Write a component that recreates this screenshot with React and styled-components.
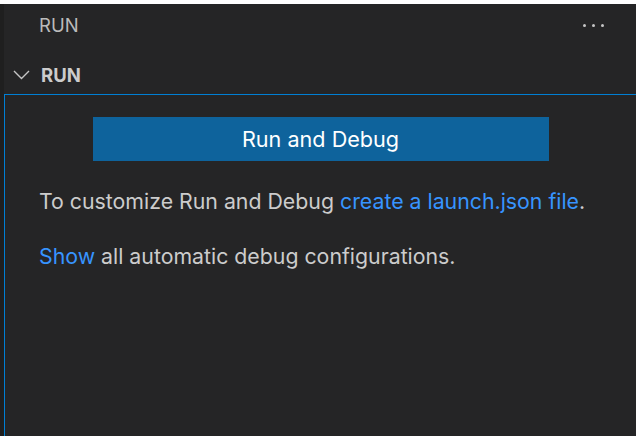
import React from "react"
import styled, { createGlobalStyle } from "styled-components"

const GlobalStyle = createGlobalStyle`
  html, body {
    margin: 0;
    padding: 0;
    background: #ffffff;
  }
  body {
    font-family: Inter, "Liberation Sans", sans-serif;
  }
`

const Frame = styled.div`
  display: flex;
  width: 636px;
  height: 432px;
  margin-top: 4px;
  overflow: hidden;
`

const Edge = styled.div`
  width: 4px;
  background: #1f1f1f;
`

const Sidebar = styled.div`
  flex: 1;
  display: flex;
  flex-direction: column;
  background: #252526;
  color: #cccccc;
`

const TitleBar = styled.div`
  display: flex;
  align-items: center;
  justify-content: space-between;
  height: 42px;
  padding: 0 32px 0 35px;
  font-size: 18.5px;
  color: #bbbbbb;
`

const Dots = styled.div`
  display: flex;
  gap: 6px;

  span {
    width: 3px;
    height: 3px;
    border-radius: 50%;
    background: #c5c5c5;
  }
`

const SectionHeader = styled.div`
  display: flex;
  align-items: center;
  height: 38px;
  padding: 10px 0 0 9px;
  font-size: 18.5px;
  font-weight: 700;
  color: #cccccc;

  svg {
    margin-right: 11px;
  }
`

const Body = styled.div`
  flex: 1;
  border: 1px solid #007fd4;
  border-bottom: none;
  border-right: none;
  padding: 22px 34px 0;
`

const Button = styled.button`
  display: block;
  width: 456px;
  height: 44px;
  margin: 0 auto;
  border: none;
  background: #0e639c;
  color: #ffffff;
  font-family: inherit;
  font-size: 21.6px;
`

const Para = styled.p`
  margin: ${(p) => p.top}px 0 0;
  font-size: 21.3px;
  line-height: 28px;
  color: #cccccc;
`

const Link = styled.a`
  color: #3794ff;
  text-decoration: none;
`

const Chevron = () => (
  <svg width="17" height="10" viewBox="0 0 17 10">
    <polyline
      points="1,1 8.5,8.5 16,1"
      fill="none"
      stroke="#c5c5c5"
      strokeWidth="1.4"
    />
  </svg>
)

const App = () => (
  <>
    <GlobalStyle />
    <Frame>
      <Edge />
      <Sidebar>
        <TitleBar>
          <span>RUN</span>
          <Dots>
            <span />
            <span />
            <span />
          </Dots>
        </TitleBar>
        <SectionHeader>
          <Chevron />
          RUN
        </SectionHeader>
        <Body>
          <Button>Run and Debug</Button>
          <Para top={26}>
            To customize Run and Debug <Link href="#">create a launch.json file</Link>.
          </Para>
          <Para top={27}>
            <Link href="#">Show</Link> all automatic debug configurations.
          </Para>
        </Body>
      </Sidebar>
    </Frame>
  </>
)

export default App
